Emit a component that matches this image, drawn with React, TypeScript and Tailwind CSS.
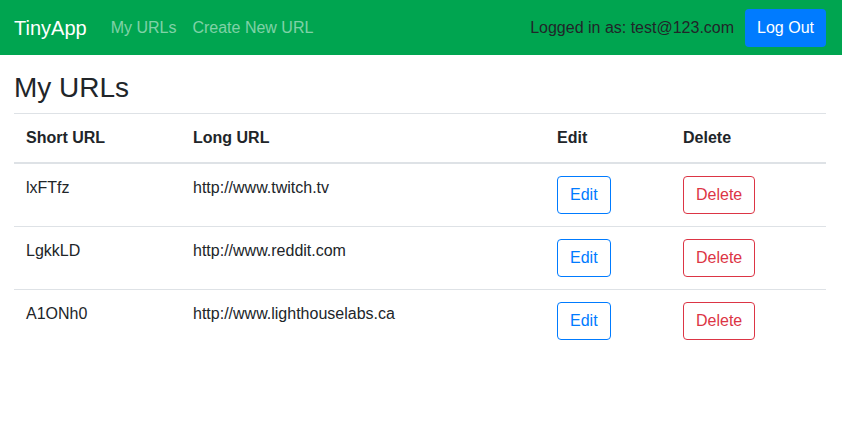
import React from 'react';

type UrlRow = {
  id: string;
  longURL: string;
};

const urls: UrlRow[] = [
  { id: 'lxFTfz', longURL: 'http://www.twitch.tv' },
  { id: 'LgkkLD', longURL: 'http://www.reddit.com' },
  { id: 'A1ONh0', longURL: 'http://www.lighthouselabs.ca' },
];

const Navbar = () => (
  <nav className="flex h-[55px] items-center justify-between bg-[#00a550] pl-[14px] pr-4">
    <div className="flex items-center">
      <a className="mr-4 text-[20px] leading-[30px] text-white">TinyApp</a>
      <a className="px-2 text-white/50">My URLs</a>
      <a className="px-2 text-white/50">Create New URL</a>
    </div>
    <div className="flex items-center">
      <span className="mr-[11px] text-[#212529]">Logged in as: test@123.com</span>
      <button className="h-[38px] rounded bg-[#007bff] px-3 text-white">Log Out</button>
    </div>
  </nav>
);

const App = () => {
  return (
    <div className="min-h-screen bg-white font-['Liberation_Sans',Arial,sans-serif] text-base leading-6 text-[#212529]">
      <Navbar />
      <main className="pl-[14px] pr-4">
        <h1 className="mt-4 mb-2 text-[28px] leading-[1.2] font-medium">My URLs</h1>
        <table className="w-full border-collapse text-left">
          <thead>
            <tr>
              <th className="w-[167px] border-t border-b-2 border-[#dee2e6] p-3 align-bottom font-bold">Short URL</th>
              <th className="w-[364px] border-t border-b-2 border-[#dee2e6] p-3 align-bottom font-bold">Long URL</th>
              <th className="w-[126px] border-t border-b-2 border-[#dee2e6] p-3 align-bottom font-bold">Edit</th>
              <th className="border-t border-b-2 border-[#dee2e6] p-3 align-bottom font-bold">Delete</th>
            </tr>
          </thead>
          <tbody>
            {urls.map((url, i) => (
              <tr key={url.id}>
                <td className={`p-3 align-top ${i > 0 ? 'border-t border-[#dee2e6]' : ''}`}>{url.id}</td>
                <td className={`p-3 align-top ${i > 0 ? 'border-t border-[#dee2e6]' : ''}`}>{url.longURL}</td>
                <td className={`p-3 align-top ${i > 0 ? 'border-t border-[#dee2e6]' : ''}`}>
                  <button className="h-[38px] rounded border border-[#007bff] px-3 text-[#007bff]">Edit</button>
                </td>
                <td className={`p-3 align-top ${i > 0 ? 'border-t border-[#dee2e6]' : ''}`}>
                  <button className="h-[38px] rounded border border-[#dc3545] px-3 text-[#dc3545]">Delete</button>
                </td>
              </tr>
            ))}
          </tbody>
        </table>
      </main>
    </div>
  );
};

export default App;
